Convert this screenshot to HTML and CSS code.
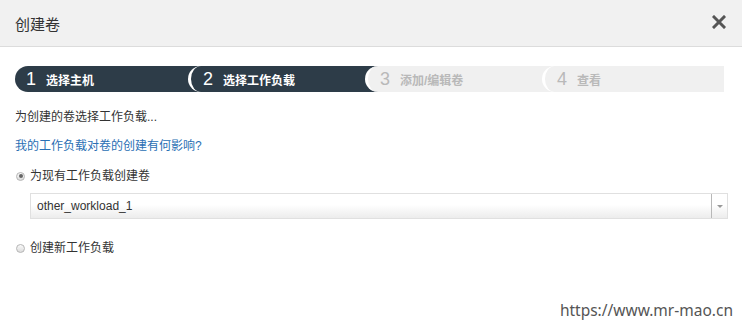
FILE: index.html
```html
<!DOCTYPE html>
<html>
<head>
  <meta charset="UTF-8">
  <title>创建卷</title>
  <link rel="stylesheet" href="styles.css">
</head>
<body>
  <div class="dialog">
    <div class="dialog-header">
      <span class="dialog-title">创建卷</span>
      <svg class="close" width="14" height="14" viewBox="0 0 14 14">
        <path d="M2 2 L12 12 M12 2 L2 12" stroke="#555" stroke-width="3" stroke-linecap="square"/>
      </svg>
    </div>

    <!-- wizard steps -->
    <div class="steps">
      <div class="step active"><span class="num">1</span><span class="label">选择主机</span></div>
      <div class="step active"><span class="num">2</span><span class="label">选择工作负载</span></div>
      <div class="step"><span class="num">3</span><span class="label">添加/编辑卷</span></div>
      <div class="step"><span class="num">4</span><span class="label">查看</span></div>
    </div>

    <div class="dialog-body">
      <p class="intro">为创建的卷选择工作负载...</p>
      <p class="help"><a href="#">我的工作负载对卷的创建有何影响?</a></p>

      <div class="option">
        <span class="radio checked"></span>
        <span>为现有工作负载创建卷</span>
      </div>
      <div class="select">
        <span class="select-value">other_workload_1</span>
        <span class="select-arrow"></span>
      </div>

      <div class="option option-new">
        <span class="radio"></span>
        <span>创建新工作负载</span>
      </div>
    </div>
  </div>

  <div class="watermark">https://www.mr-mao.cn</div>
</body>
</html>
```

FILE: styles.css
```css
body {
  margin: 0;
  font-family: "Liberation Sans", "Noto Sans CJK SC", sans-serif;
  font-size: 12px;
  color: #333;
  background: #fff;
}
.dialog-header {
  height: 46px;
  border-bottom: 1px solid #dcdcdc;
  background: #f1f1f1;
  display: flex;
  align-items: center;
  justify-content: space-between;
  padding: 0 16px 0 15px;
}
.dialog-title {
  font-size: 15px;
  color: #333;
}
.close {
  display: block;
  margin-top: -2px;
}
.steps {
  display: flex;
  height: 26px;
  margin: 19px 18px 0 15px;
}
.step {
  box-sizing: border-box;
  width: 190px;
  display: flex;
  align-items: center;
  padding-left: 11px;
  background: #f0f0f0;
  color: #b9b9b9;
  border-radius: 13px 0 0 13px;
  white-space: nowrap;
}
.step:first-child {
  width: 186px;
}
.step:last-child {
  flex: 1;
}
.step + .step {
  margin-left: -13px;
  border-left: 3px solid #fff;
  padding-left: 12px;
}
.step.active {
  background: #2d3c48;
  color: #fff;
}
.step .num {
  font-size: 18px;
  width: 20px;
}
.step .label {
  font-weight: bold;
  font-size: 12px;
}
.dialog-body {
  padding: 0 14px 0 15px;
}
.dialog-body p {
  margin: 0;
  line-height: 16px;
}
.intro {
  padding-top: 17px;
}
.help {
  margin-top: 13px !important;
}
.help a {
  color: #2a6fb4;
  text-decoration: none;
}
.option {
  display: flex;
  align-items: center;
  line-height: 16px;
  margin-top: 14px;
}
.option-new {
  margin-top: 21px;
}
.radio {
  box-sizing: border-box;
  width: 9px;
  height: 9px;
  border-radius: 50%;
  border: 1px solid #b5b5b5;
  background: linear-gradient(#fafafa, #dcdcdc);
  margin: 0 5px 0 1px;
  position: relative;
}
.radio.checked::after {
  content: "";
  position: absolute;
  left: 1.5px;
  top: 1.5px;
  width: 4px;
  height: 4px;
  border-radius: 50%;
  background: #666;
}
.select {
  display: flex;
  height: 26px;
  box-sizing: border-box;
  margin: 9px 0 0 15px;
  border: 1px solid #e0e0e0;
  background: linear-gradient(#fff 45%, #ececec);
}
.select-value {
  flex: 1;
  display: flex;
  align-items: center;
  padding-left: 6px;
  color: #333;
}
.select-arrow {
  width: 15px;
  border-left: 1px solid #b8b8b8;
  position: relative;
}
.select-arrow::after {
  content: "";
  position: absolute;
  left: 5px;
  top: 11px;
  border-left: 3px solid transparent;
  border-right: 3px solid transparent;
  border-top: 3px solid #999;
}
.watermark {
  position: absolute;
  right: 9px;
  top: 299px;
  font-family: "Noto Sans", sans-serif;
  font-size: 15.5px;
  color: #555;
}
```
